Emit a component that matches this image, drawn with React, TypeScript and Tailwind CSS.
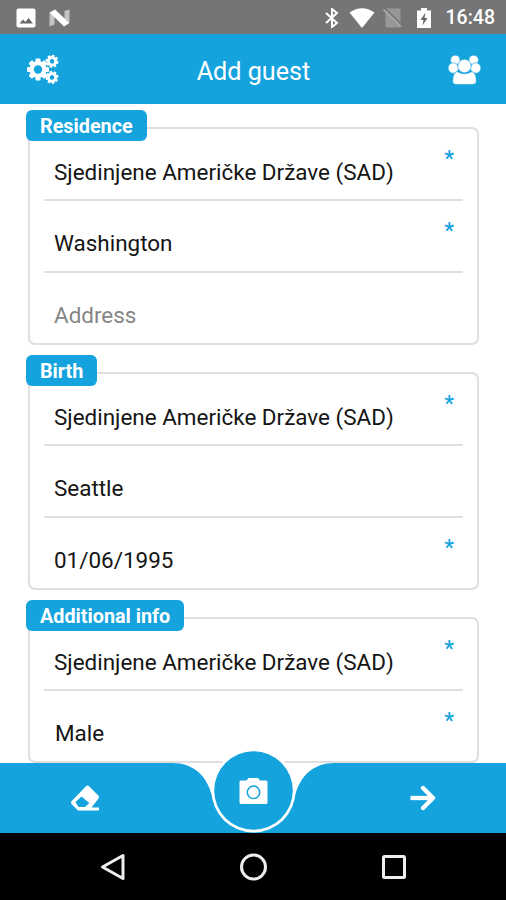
import type { ReactNode } from "react";

const blue = "#15a3de";

function Field({ value, placeholder, required, first, shift }: { value?: string; placeholder?: string; required?: boolean; first?: boolean; shift?: boolean }) {
  return (
    <div className={`mx-[14px] flex shrink-0 justify-between pl-[10px] pr-[9px] ${first ? "h-[70px]" : "h-[72px] border-t-2 border-[#dfdfdf]"}`}>
      <span className={`whitespace-nowrap text-[22.45px] leading-[26px] ${first ? "pt-[30px]" : "pt-[29px]"} ${shift ? "pl-[1px]" : ""} ${value ? "text-[#151515]" : "text-[#858585]"}`}>
        {value ?? placeholder}
      </span>
      {required && <span className="pt-[17px] text-[22px] font-medium leading-[26px] text-[#15a3de]">*</span>}
    </div>
  );
}

function Section({ title, short, children }: { title: string; short?: boolean; children: ReactNode }) {
  return (
    <section className={`relative ml-[28px] mr-[27px] flex shrink-0 flex-col rounded-[7px] border-2 border-[#dfdfdf] ${short ? "h-[146px]" : "h-[218px]"}`}>
      <h2 className="absolute -left-[4px] -top-[19px] h-[31px] whitespace-nowrap rounded-[6px] bg-[#15a3de] px-[14px] text-[19.8px] font-bold leading-[33px] text-white">
        {title}
      </h2>
      {children}
    </section>
  );
}

function Gear({ cx, cy, r, tooth, hole, turn = 0 }: { cx: number; cy: number; r: number; tooth: number; hole: number; turn?: number }) {
  const body = r * 0.77;
  return (
    <g transform={`translate(${cx} ${cy}) rotate(${turn})`}>
      {[0, 45, 90, 135].map((angle) => (
        <rect key={angle} x={-tooth / 2} y={-r} width={tooth} height={r * 2} rx={tooth / 5} transform={`rotate(${angle})`} fill="#fff" />
      ))}
      <circle r={body} fill="#fff" />
      <circle r={hole} fill={blue} />
    </g>
  );
}

export default function App() {
  return (
    <div className="flex h-[900px] w-[506px] flex-col overflow-hidden bg-white font-[Roboto,sans-serif]">
      <div className="flex h-[34px] shrink-0 items-center bg-[#757575] pl-[16px] pr-[11px] pt-[1px] text-white">
        <svg width="20" height="20" viewBox="0 0 20 20">
          <rect x="0.5" y="0.5" width="19" height="19" rx="2" fill="#fff" />
          <path d="M3.500 15.500l3.500-4 2.500 2.500 3-4 4.500 5.500z" fill="#666" />
        </svg>
        <svg className="ml-[13px]" width="21" height="18" viewBox="0 0 21 18">
          <path d="M0.500 4v13.500l5-2V7z M20.500 13.500V0.500l-5 1.500v8z" fill="#c4c4c4" />
          <path d="M0.500 3.500L6 0.500l14.500 13.500-5.500 3.500z" fill="#fff" />
        </svg>
        <svg className="ml-auto" width="14" height="20" viewBox="0 0 14 20" fill="none" stroke="#fff" strokeWidth="2">
          <path d="M1 5l11 10-5 4V1l5 4L1 15" />
        </svg>
        <svg className="ml-[10px]" width="26" height="20" viewBox="0 0 26 20">
          <path d="M0.500 4.500Q13-4 25.500 4.500L13 20z" fill="#fff" />
        </svg>
        <svg className="ml-[8px]" width="19" height="20" viewBox="0 0 19 20">
          <rect x="2.500" y="0.500" width="15" height="19" rx="1.500" fill="#989898" />
          <path d="M1.500 0L19 16.800" stroke="#757575" strokeWidth="1.600" />
          <path d="M0.500 1.500l17.500 17" stroke="#a8a8a8" strokeWidth="1.600" />
        </svg>
        <svg className="ml-[15px]" width="14" height="20" viewBox="0 0 14 20">
          <path d="M0 2.500h4V0h6v2.500h4V20H0z" fill="#fff" />
          <path d="M8.500 4.500L3.500 12H6.500L5.500 17.500 10.500 10H7.500z" fill="#666" />
        </svg>
        <span className="ml-[15px] pt-[1px] text-[19.500px] font-medium leading-[24px]">16:48</span>
      </div>

      <header className="flex h-[70px] shrink-0 items-center justify-between bg-[#15a3de] pl-[27px] pr-[25px] text-white">
        <svg width="32" height="30" viewBox="0 0 32 30">
          <Gear cx={11} cy={15.5} r={11} tooth={5} hole={4.2} />
          <Gear cx={25} cy={7.3} r={6.5} tooth={2.8} hole={2.3} turn={12} />
          <Gear cx={25} cy={23.4} r={6.5} tooth={2.8} hole={2.3} turn={-12} />
        </svg>
        <h1 className="pt-[5px] text-[25.200px] leading-[30px]">Add guest</h1>
        <svg className="mt-[1px]" width="33" height="30" viewBox="0 0 33 30" fill="#fff" stroke={blue} strokeWidth="0.600">
          <circle cx="7.300" cy="5" r="4.800" />
          <circle cx="25.700" cy="5" r="4.800" />
          <circle cx="5.300" cy="13" r="5.200" />
          <circle cx="27.700" cy="13" r="5.200" />
          <path d="M9 16.500Q16.500 21 24 16.500Q28.300 18 28.300 26Q28.300 29.500 24 29.500H9Q4.700 29.500 4.700 26Q4.700 18 9 16.500Z" />
          <circle cx="16.500" cy="11" r="6.700" />
        </svg>
      </header>

      <main className="flex min-h-0 flex-1 flex-col gap-[27px] overflow-hidden pt-[23px]">
        <Section title="Residence">
          <Field first required value="Sjedinjene Američke Države (SAD)" />
          <Field required value="Washington" />
          <Field placeholder="Address" />
        </Section>
        <Section title="Birth">
          <Field first required value="Sjedinjene Američke Države (SAD)" />
          <Field value="Seattle" />
          <Field required value="01/06/1995" />
        </Section>
        <Section short title="Additional info">
          <Field first required value="Sjedinjene Američke Države (SAD)" />
          <Field required shift value="Male" />
        </Section>
      </main>

      <footer className="relative flex h-[70px] shrink-0 items-center justify-between bg-white pl-[71px] pr-[70px]">
        <svg className="absolute left-0 top-[-12px]" width="506" height="82" viewBox="0 0 506 82">
          <path d="M0 12H172C194 12 207 25 212 45L225 69H282L295 45C300 25 313 12 335 12H506V82H0Z" fill={blue} />
          <circle cx="253.500" cy="39.500" r="42" fill="#fff" />
          <circle cx="253.500" cy="39.500" r="39.300" fill={blue} />
          <path d="M239.500 31q0-1.500 1.500-1.500h5.500l2-2.500h9.500l2 2.500h6q1.500 0 1.500 1.500v20.500q0 1.500-1.500 1.500h-25q-1.500 0-1.500-1.500z" fill="#fff" />
          <circle cx="253.500" cy="41.300" r="6.200" fill="#fff" stroke={blue} strokeWidth="1.500" />
        </svg>
        <svg className="relative" width="28" height="26" viewBox="0 0 28 26">
          <path fill="#fff" fillRule="evenodd" d="M15 1.200Q16.500-0.300 18 1.200L27.300 10.500Q28.500 12 27.500 13.500L20.500 22.500H28V25.500H7L0.500 19Q-0.500 17.500 0.700 16ZM10.500 11.500L4.500 17L7.500 22H14L18.300 18Z" />
        </svg>
        <svg className="relative" width="26" height="26" viewBox="0 0 26 26" fill="none" stroke="#fff" strokeWidth="4.300">
          <path d="M0.500 13h22" />
          <path d="M13 3L23 13L13 23" strokeLinejoin="round" strokeLinecap="round" />
        </svg>
      </footer>

      <nav className="flex h-[67px] shrink-0 items-center justify-between bg-black pl-[100px] pr-[99px]">
        <svg width="26" height="28" viewBox="0 0 26 28" fill="none" stroke="#eee" strokeWidth="3">
          <path d="M2.500 14L23 2.500v23z" strokeLinejoin="round" />
        </svg>
        <svg width="28" height="28" viewBox="0 0 28 28" fill="none" stroke="#eee" strokeWidth="3">
          <circle cx="13.500" cy="14" r="12" />
        </svg>
        <svg width="26" height="26" viewBox="0 0 26 26" fill="none" stroke="#eee" strokeWidth="3">
          <rect x="2.500" y="2.500" width="21" height="21" rx="1" />
        </svg>
      </nav>
    </div>
  );
}
